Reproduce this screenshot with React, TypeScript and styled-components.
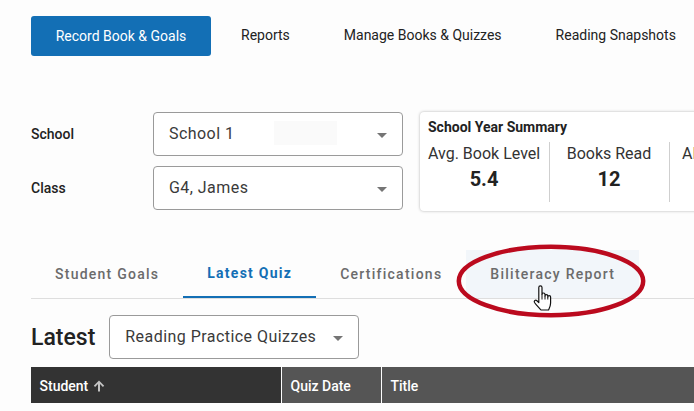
import { createGlobalStyle } from "styled-components";
import styled from "styled-components";

const GlobalStyle = createGlobalStyle`
  html, body {
    margin: 0;
    padding: 0;
    height: 411px;
    overflow: hidden;
    background: #fdfdfd;
    font-family: Roboto, "Liberation Sans", sans-serif;
  }
`;

const navItems = ["Reports", "Manage Books & Quizzes", "Reading Snapshots"];
const tabs = ["Student Goals", "Latest Quiz", "Certifications", "Biliteracy Report"];

function Caret() {
  return (
    <CaretIcon viewBox="0 0 10 5">
      <path d="M0 0h10L5 5z" fill="#757575" />
    </CaretIcon>
  );
}

function App() {
  return (
    <Page>
      <GlobalStyle />
      <Nav>
        <NavPrimary>Record Book &amp; Goals</NavPrimary>
        {navItems.map((item) => (
          <NavLink key={item}>{item}</NavLink>
        ))}
      </Nav>

      <FilterRow>
        <Filters>
          <FilterLine>
            <FilterLabel>School</FilterLabel>
            <Select $width={250}>
              <SelectText>School 1</SelectText>
              <Redacted />
              <Caret />
            </Select>
          </FilterLine>
          <FilterLine>
            <FilterLabel>Class</FilterLabel>
            <Select $width={250}>
              <SelectText>G4, James</SelectText>
              <Caret />
            </Select>
          </FilterLine>
        </Filters>
        <SummaryCard>
          <SummaryTitle>School Year Summary</SummaryTitle>
          <SummaryStats>
            <Stat $width={122}>
              <StatLabel>Avg. Book Level</StatLabel>
              <StatValue>5.4</StatValue>
            </Stat>
            <Stat $width={120}>
              <StatLabel>Books Read</StatLabel>
              <StatValue>12</StatValue>
            </Stat>
            <Stat $width={200}>
              <StatLabel>AR Points</StatLabel>
            </Stat>
          </SummaryStats>
        </SummaryCard>
      </FilterRow>

      <Tabs>
        {tabs.map((tab, i) => (
          <Tab key={tab} $active={i === 1} $hover={i === 3}>
            {tab}
          </Tab>
        ))}
      </Tabs>

      <LatestRow>
        <LatestTitle>Latest</LatestTitle>
        <Select $width={250}>
          <SelectText>Reading Practice Quizzes</SelectText>
          <Caret />
        </Select>
      </LatestRow>

      <TableHead>
        <HeadCell $width={250} $dark>
          Student
          <SortIcon viewBox="0 0 12 12">
            <path d="M6 .5 .8 5.800l1.300 1.200 2.900-2.900V11.500h2V4.100l2.900 2.900 1.300-1.200z" fill="#c4c4c4" />
          </SortIcon>
        </HeadCell>
        <HeadCell $width={99}>Quiz Date</HeadCell>
        <HeadCell $grow>Title</HeadCell>
      </TableHead>

      <Callout viewBox="0 0 190 74">
        <ellipse cx="95" cy="37" rx="92.200" ry="34.200" fill="none" stroke="#bb0a1e" strokeWidth="4.500" />
      </Callout>
      <HandCursor viewBox="0 0 20 26">
        <path
          d="M5.800 15V2.500a1.600 1.600 0 0 1 3.200 0V9.500a1.500 1.500 0 0 1 3 0V11a1.400 1.400 0 0 1 2.800 0V12a1.400 1.400 0 0 1 2.800 0V18c0 3-1 5-2 7H8C6 22.500 3.500 20.500 1.500 17.500c-.9-1.600 1-3 2.400-1.800L5.800 17.500z"
          fill="#fff"
          stroke="#111"
          strokeWidth="1.200"
          strokeLinejoin="round"
        />
        <path d="M9 9.500V14.500M12 11V14.500M14.800 12V14.500" fill="none" stroke="#111" strokeWidth="1" />
      </HandCursor>
    </Page>
  );
}

export default App;

const Page = styled.div`
  position: relative;
  width: 694px;
  height: 411px;
  overflow: hidden;
  padding: 16px 0 0 31px;
  box-sizing: border-box;
`;

const Nav = styled.nav`
  display: flex;
  align-items: center;
  height: 40px;
  white-space: nowrap;
`;

const NavPrimary = styled.div`
  flex-shrink: 0;
  width: 180px;
  height: 40px;
  display: flex;
  align-items: center;
  justify-content: center;
  background: #136fb5;
  border-radius: 3px;
  color: #fff;
  font-size: 14px;
`;

const NavLink = styled.div`
  flex-shrink: 0;
  margin-left: 30px;
  padding-right: 24px;
  color: #222;
  font-size: 14px;
  margin-top: -3px;
`;

const FilterRow = styled.div`
  display: flex;
  gap: 16px;
  margin-top: 56px;
  white-space: nowrap;
`;

const Filters = styled.div`
  display: flex;
  flex-direction: column;
  gap: 10px;
  flex-shrink: 0;
`;

const FilterLine = styled.div`
  display: flex;
  align-items: center;
`;

const FilterLabel = styled.div`
  width: 122px;
  color: #222;
  font-size: 14px;
  font-weight: 500;
`;

const Select = styled.div<{ $width: number }>`
  position: relative;
  flex-shrink: 0;
  width: ${(p) => p.$width}px;
  height: 44px;
  box-sizing: border-box;
  display: flex;
  align-items: center;
  padding-left: 15px;
  background: #fff;
  border: 1px solid #9a9a9a;
  border-radius: 4px;
  color: #3a3a3a;
  font-size: 16px;
`;

const SelectText = styled.span`
  letter-spacing: 0.45px;
  margin-top: -2px;
`;

const Redacted = styled.span`
  position: absolute;
  left: 120px;
  top: 8px;
  width: 63px;
  height: 24px;
  background: #fafafa;
`;

const CaretIcon = styled.svg`
  position: absolute;
  right: 15px;
  top: 20px;
  width: 10px;
  height: 5px;
`;

const SummaryCard = styled.div`
  width: 320px;
  height: 99px;
  flex-shrink: 0;
  box-sizing: border-box;
  margin-left: 1px;
  padding: 8px;
  background: #fff;
  border-radius: 4px;
  box-shadow: 0 0 3px rgba(0, 0, 0, 0.3);
`;

const SummaryTitle = styled.div`
  color: #222;
  font-size: 14px;
  font-weight: 700;
  line-height: 15px;
`;

const SummaryStats = styled.div`
  display: flex;
  margin-top: 7px;
`;

const Stat = styled.div<{ $width: number }>`
  flex-shrink: 0;
  width: ${(p) => p.$width}px;
  height: 60px;
  box-sizing: border-box;
  text-align: center;
  border-right: 1px solid #cfcfcf;
  &:first-child {
    text-align: left;
  }
  &:nth-child(2) {
    padding-right: 1px;
  }
  &:last-child {
    border-right: 0;
    text-align: left;
    padding-left: 12px;
  }
`;

const StatLabel = styled.div`
  color: #333;
  font-size: 16px;
  line-height: 22px;
  margin-top: 1px;
`;

const StatValue = styled.div`
  color: #222;
  font-size: 20px;
  font-weight: 700;
  line-height: 28px;
  ${Stat}:first-child & {
    width: 112px;
    text-align: center;
  }
`;

const Tabs = styled.div`
  display: flex;
  height: 49px;
  margin-top: 39px;
  box-sizing: border-box;
  border-bottom: 1px solid #dedede;
  white-space: nowrap;
`;

const Tab = styled.div<{ $active?: boolean; $hover?: boolean }>`
  height: 48px;
  box-sizing: border-box;
  display: flex;
  align-items: center;
  padding: 0 24px;
  color: ${(p) => (p.$active ? "#136fb5" : "#6b6b6b")};
  background: ${(p) => (p.$hover ? "#f2f6fa" : "transparent")};
  border-bottom: ${(p) => (p.$active ? "2px solid #136fb5" : "0")};
  font-size: 14px;
  font-weight: ${(p) => (p.$active ? 700 : 500)};
  letter-spacing: 1.25px;
`;

const LatestRow = styled.div`
  display: flex;
  align-items: center;
  gap: 14px;
  margin-top: 16px;
`;

const LatestTitle = styled.h2`
  margin: 0;
  color: #222;
  font-size: 23px;
  font-weight: 500;
`;

const TableHead = styled.div`
  display: flex;
  height: 36px;
  margin-top: 8px;
  gap: 1px;
`;

const HeadCell = styled.div<{ $width?: number; $grow?: boolean; $dark?: boolean }>`
  flex: ${(p) => (p.$grow ? "1" : "none")};
  width: ${(p) => (p.$width ? `${p.$width}px` : "auto")};
  display: flex;
  align-items: center;
  padding: 2px 0 0 8.500px;
  box-sizing: border-box;
  background: ${(p) => (p.$dark ? "#333" : "#555")};
  color: #fff;
  font-size: 14px;
  font-weight: 500;
`;

const SortIcon = styled.svg`
  width: 12px;
  height: 12px;
  margin-left: 5px;
`;

const Callout = styled.svg`
  position: absolute;
  left: 455.500px;
  top: 243.500px;
  width: 190px;
  height: 74px;
`;

const HandCursor = styled.svg`
  position: absolute;
  left: 533px;
  top: 285px;
  width: 20px;
  height: 26px;
`;
